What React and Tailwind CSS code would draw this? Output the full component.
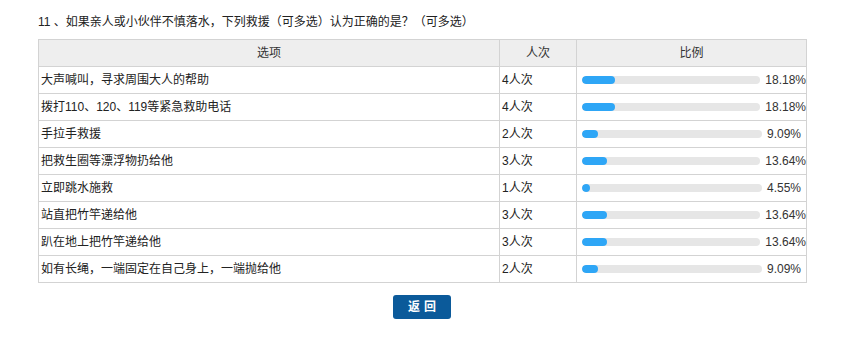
import React from "react";

const rows = [
  { text: "大声喊叫，寻求周围大人的帮助", count: 4, pct: 18.18 },
  { text: "拨打110、120、119等紧急救助电话", count: 4, pct: 18.18 },
  { text: "手拉手救援", count: 2, pct: 9.09 },
  { text: "把救生圈等漂浮物扔给他", count: 3, pct: 13.64 },
  { text: "立即跳水施救", count: 1, pct: 4.55 },
  { text: "站直把竹竿递给他", count: 3, pct: 13.64 },
  { text: "趴在地上把竹竿递给他", count: 3, pct: 13.64 },
  { text: "如有长绳，一端固定在自己身上，一端抛给他", count: 2, pct: 9.09 },
];

const App = () => {
  return (
    <div
      className="bg-white text-[#333] text-[12px] w-[861px] h-[348px] pt-[14px] pl-[38px]"
      style={{ fontFamily: '"Liberation Sans", "Noto Sans CJK SC", sans-serif' }}
    >
      <div className="h-[25px] leading-[16px] text-[#222]">
        11 、如果亲人或小伙伴不慎落水，下列救援（可多选）认为正确的是？（可多选）
      </div>
      <table className="border-collapse w-[768px] table-fixed">
        <colgroup>
          <col className="w-[461px]" />
          <col className="w-[77px]" />
          <col className="w-[230px]" />
        </colgroup>
        <thead>
          <tr className="h-[27px] bg-[#eeeeee]">
            <th className="border border-[#d3d3d3] font-normal text-center">选项</th>
            <th className="border border-[#d3d3d3] font-normal text-center">人次</th>
            <th className="border border-[#d3d3d3] font-normal text-center">比例</th>
          </tr>
        </thead>
        <tbody>
          {rows.map((r, i) => (
            <tr key={i} className="h-[27px]">
              <td className="border border-[#d3d3d3] pl-[2px] text-[#222]">{r.text}</td>
              <td className="border border-[#d3d3d3] pl-[2px] text-[#222]">{r.count}人次</td>
              <td className="border border-[#d3d3d3] pl-[5px] pr-0">
                <div className="flex items-center">
                  <div className="w-[180px] h-[8px] rounded-full bg-[#e6e6e6] overflow-hidden">
                    <div
                      className="h-full rounded-full bg-[#2ea6f6]"
                      style={{ width: Math.max(8, (r.pct / 100) * 180) + "px" }}
                    />
                  </div>
                  <span className="ml-[5px] whitespace-nowrap text-[#333]">{r.pct.toFixed(2)}%</span>
                </div>
              </td>
            </tr>
          ))}
        </tbody>
      </table>
      <div className="w-[768px] flex justify-center pt-[12px]">
        <button className="w-[58px] h-[24px] rounded-[3px] bg-[#0b5a9a] text-white font-bold text-[12px] tracking-[4px] pl-[4px]">
          返回
        </button>
      </div>
    </div>
  );
};

export default App;
